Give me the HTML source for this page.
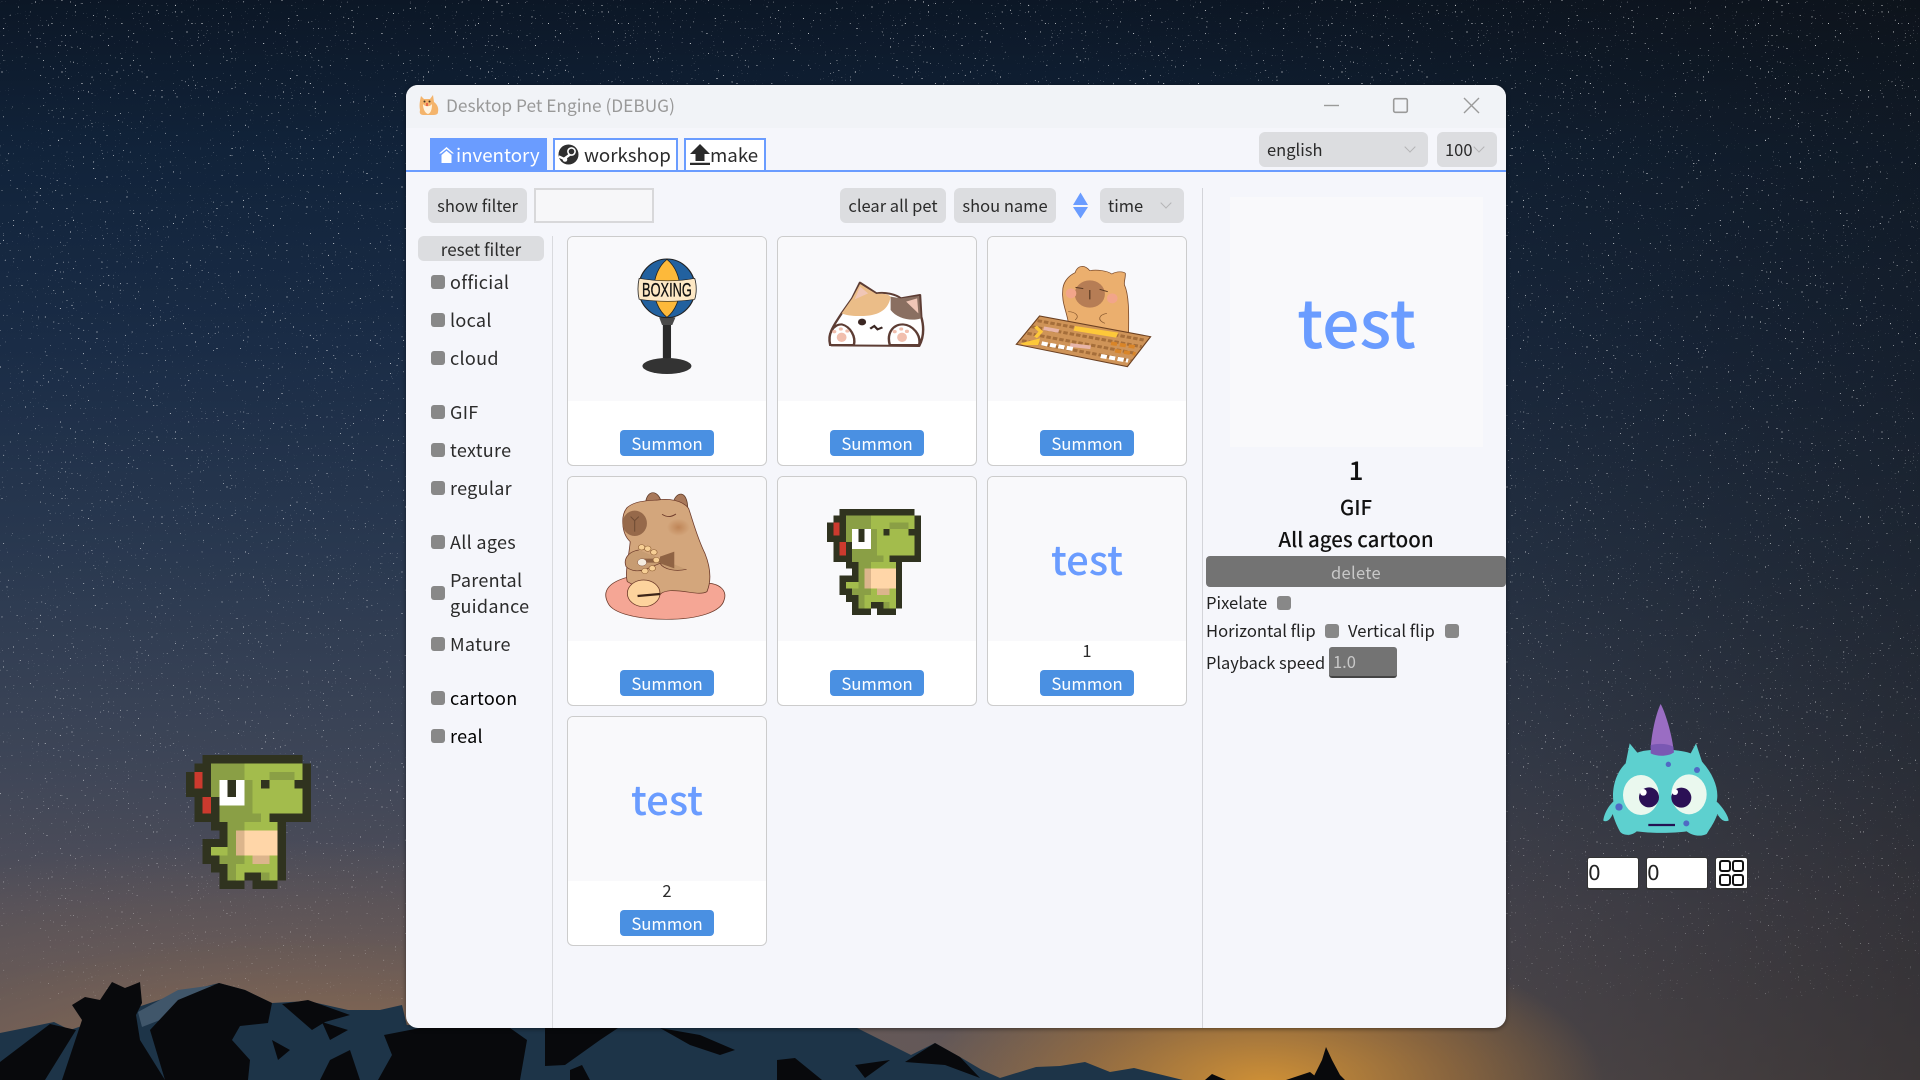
<!DOCTYPE html>
<html><head><meta charset="utf-8"><style>
html,body{margin:0;padding:0;width:1920px;height:1080px;overflow:hidden;background:#1a2230}
*{box-sizing:border-box}
body{position:relative;font-family:"Noto Sans CJK JP","Liberation Sans",sans-serif;color:#2b2b2b}
.a,.t,.b,.c,.card,svg.o{position:absolute}
.bg{position:absolute;left:0;top:0;width:1920px;height:1080px;background:
radial-gradient(ellipse 340px 150px at 1265px 1085px,rgba(214,148,52,.95),rgba(175,120,55,.6) 55%,rgba(140,100,60,0) 100%),
radial-gradient(ellipse 820px 240px at 330px 1080px,rgba(150,112,80,.9),rgba(115,95,85,.5) 60%,rgba(80,75,85,0) 100%),
linear-gradient(90deg,rgba(0,0,0,0) 55%,rgba(15,15,15,.45) 100%),
linear-gradient(180deg,#0c1726 0,#11233a 14%,#1a2c46 32%,#2a3950 52%,#3d4557 70%,#514f5a 84%,#5f5658 100%)}
.win{position:absolute;left:406px;top:85px;width:1100px;height:943px;background:#f5f6fb;border-radius:12px;box-shadow:0 1px 5px rgba(0,0,0,.45);overflow:hidden}
.title{position:absolute;left:0;top:0;width:1100px;height:43px;background:#f1f3f7}
.t{white-space:nowrap;line-height:26px;height:26px;font-size:18px}
.lb{letter-spacing:.3px}
.b{background:#dcdde0;border-radius:6px;display:flex;align-items:center;justify-content:center;font-size:16.5px;color:#2b2b2b;white-space:nowrap}
.c{width:14px;height:14px;background:#888;border-radius:3px}
.card{width:200px;height:230px;background:#fff;border:1px solid #ccc;border-radius:6px;overflow:hidden}
.im{position:absolute;left:0;top:0;width:198px;height:164px;background:#f9f9fb}
.sm{position:absolute;left:52px;top:193px;width:94px;height:26px;background:#4a90e2;border-radius:4px;color:#fff;font-size:16.7px;display:flex;align-items:center;justify-content:center}
.nm{position:absolute;left:0;width:198px;top:161px;text-align:center;font-size:16.5px;line-height:24px}
.test{position:absolute;left:0;width:198px;text-align:center;color:#6a9cff;font-size:40px;line-height:50px;top:56px;font-weight:500}
.tab{position:absolute;top:138px;height:33px;background:#fff;border:2px solid #6a9cff;border-bottom:0}
.sel:after{content:"";position:absolute;width:7px;height:7px;border-right:1.5px solid #b4b4b6;border-bottom:1.5px solid #b4b4b6;transform:rotate(45deg);right:14.5px;top:11px}
.sel{justify-content:flex-start;padding-left:8px}
.tb{font-size:18.7px}
</style></head><body>
<div class="bg"></div>
<svg class="o" style="left:0;top:0" width="1920" height="1080">
<defs><filter id="st" x="0" y="0" width="100%" height="100%" color-interpolation-filters="sRGB"><feTurbulence type="fractalNoise" baseFrequency="0.6" numOctaves="1" seed="11"/><feColorMatrix values="0 0 0 0 1  0 0 0 0 1  0 0 0 0 1  20 0 0 0 -14.600"/></filter>
<linearGradient id="fd" x1="0" y1="0" x2="0" y2="1"><stop offset="0" stop-color="#fff" stop-opacity=".95"/><stop offset=".75" stop-color="#fff" stop-opacity=".6"/><stop offset="1" stop-color="#fff" stop-opacity=".15"/></linearGradient>
<mask id="mk"><rect width="1920" height="1080" fill="url(#fd)"/></mask>
<radialGradient id="bl"><stop offset="0" stop-color="#bf8557"/><stop offset="1" stop-color="#d3a67c"/></radialGradient>
<symbol id="dino" viewBox="0 0 15 16" preserveAspectRatio="none"><g shape-rendering="crispEdges">
<path fill="#30331f" d="M2 0h12v1H2zM1 1h2v1H1zM14 1h1v2h-1zM0 2h1v3H0zM2 2h1v2H2zM5 3h1v2H5zM9 3h1v1H9zM13 3h2v1h-2zM1 4h2v1H1zM14 4h1v3h-1zM1 5h1v3H1zM3 5h1v3H3zM2 7h1v1H2zM10 7h5v1H10zM3 8h2v1H3zM11 8h1v7h-1zM4 9h1v1H4zM2 10h3v1H2zM2 11h1v2H2zM3 12h1v2H3zM4 13h1v3H4zM7 14h2v1H7zM5 15h2v1H5zM8 15h3v1H8z"/>
<path fill="#8a9f45" d="M3 1h4v1H3zM3 2h4v1H3zM10 2h3v1h-3zM3 3h1v2H3zM7 3h1v3H7zM4 6h4v1H4zM4 7h5v1H4zM5 8h2v1H5zM5 9h1v3H5zM4 12h3v1H4zM5 13h1v2H5zM9 14h1v1H9z"/>
<path fill="#a3bc4c" d="M7 1h7v1H7zM7 2h3v1H7zM13 2h1v1h-1zM8 3h1v1H8zM10 3h3v1h-3zM8 4h6v3H8zM9 7h1v1H9zM7 8h4v1H7zM3 11h2v1H3zM7 12h1v1H7zM10 12h1v1h-1zM6 13h5v1H6zM6 14h1v1H6zM10 14h1v1h-1z"/>
<path fill="#fff" d="M4 3h1v3H4zM6 3h1v3H6zM5 5h1v1H5z"/>
<path fill="#cc3a2e" d="M1 2h1v2H1zM2 5h1v2H2z"/>
<path fill="#dcb58c" d="M6 9h1v3H6zM8 12h2v1H8z"/>
<path fill="#ffd6a8" d="M7 9h4v3H7z"/></g></symbol></defs>
<rect width="1920" height="1000" filter="url(#st)" mask="url(#mk)"/>
<!-- mountains -->
<polygon fill="#1d3448" points="0,1033 25,1028 54,1022 70,1030 138,1007 180,993 219,983 245,990 272,1003 308,1001 348,1010 380,1010 402,1005 420,1080 0,1080"/>
<polygon fill="#1d3448" points="400,1025 857,1028 885,1042 911,1055 935,1043 960,1057 982,1070 1000,1078 1036,1067 1060,1066 1085,1062 1110,1072 1134,1068 1183,1080 400,1080"/>
<path fill="#40566a" d="M138 1012L178 990L215 985L160 1020L142 1027Z"/>
<g fill="#08090c">
<path d="M219 983L245 990L272 1003L268 1023L240 1026L232 1040L250 1060L248 1080L165 1080L150 1030L178 1000Z"/>
<path d="M112 982L125 988L140 982L142 1003L136 1015L140 1040L165 1080L62 1080L72 1050L82 1020L72 1005L85 997L100 1000Z"/>
<path d="M0 1062L50 1024L76 1030L45 1080L0 1080Z"/>
<path d="M282 1004L308 1000L350 1015L325 1022L312 1030Z"/>
<path d="M322 1022L348 1030L330 1040Z"/>
<path d="M272 1040L290 1050L278 1060Z"/>
<path d="M330 1060L350 1050L360 1080L320 1080Z"/>
<path d="M384 1035L420 1028L510 1028L527 1040L520 1080L378 1080L392 1055Z"/>
<path d="M545 1028L618 1028L600 1040L565 1065L545 1066Z"/>
<path d="M660 1028L700 1035L735 1050L720 1055L690 1045Z"/>
<path d="M570 1070L582 1065L590 1080L570 1080Z"/>
<path d="M777 1060L795 1058L822 1080L777 1080Z"/>
<path d="M855 1065L890 1060L865 1078Z"/>
<path d="M935 1043L960 1057L980 1078L945 1065L905 1062Z"/>
<path d="M1312 1080L1322 1060L1326 1047L1332 1060L1340 1075L1345 1080Z"/>
<path d="M1205 1080L1212 1074L1226 1080ZM1286 1080L1310 1072L1320 1080Z"/>
</g>
</svg>

<svg class="o" style="left:186px;top:755px" width="125" height="134"><use href="#dino" width="125" height="134"/></svg>

<svg class="o" style="left:1560px;top:690px" width="210" height="210" viewBox="0 0 630 630">
<path fill="#5dd0cf" d="M197 220L209 160L232 188C260 175 350 175 392 190L408 160L426 215C462 255 478 300 470 335C482 345 505 375 506 392C490 398 480 385 472 372C465 395 450 415 440 432C420 442 395 436 380 424C340 430 275 430 230 424C215 438 190 438 180 425C172 410 165 395 158 372C152 388 140 398 130 392C132 370 148 345 160 335C155 290 170 245 197 220Z"/>
<path fill="#9a6dc3" d="M302 42C315 65 335 130 340 175L272 175C275 125 290 65 302 42Z"/>
<path fill="#7a58b3" d="M272 165C295 160 320 160 340 170L342 187C325 200 290 200 272 190Z"/>
<ellipse cx="243" cy="315" rx="54" ry="60" fill="#eaf8ee"/><ellipse cx="387" cy="313" rx="53" ry="60" fill="#eaf8ee"/>
<circle cx="267" cy="322" r="30" fill="#2b1055"/><circle cx="364" cy="323" r="30" fill="#2b1055"/>
<circle cx="250" cy="307" r="10" fill="#fff"/><circle cx="345" cy="306" r="9" fill="#fff"/>
<path d="M265 405H345" stroke="#241252" stroke-width="7"/>
<g fill="#5069c4"><circle cx="325" cy="223" r="8"/><circle cx="411" cy="240" r="9"/><circle cx="177" cy="351" r="11"/><circle cx="379" cy="400" r="9"/></g>
</svg>
<div class="a" style="left:1587px;top:857px;width:52px;height:33px;background:#fff;border:1px solid #333;border-bottom-width:2px;border-radius:3px;line-height:30px;color:#222;font-family:'DejaVu Sans',sans-serif;font-size:20px">0</div>
<div class="a" style="left:1646px;top:857px;width:62px;height:33px;background:#fff;border:1px solid #333;border-bottom-width:2px;border-radius:3px;line-height:30px;color:#222;font-family:'DejaVu Sans',sans-serif;font-size:20px">0</div>
<div class="a" style="left:1715px;top:857px;width:33px;height:33px;background:#fff;border:1px solid #333;border-bottom-width:2px;border-radius:3px"></div>
<svg class="o" style="left:1718px;top:859px" width="27" height="28" fill="none" stroke="#111" stroke-width="2"><rect x="2" y="2" width="10" height="10" rx="2"/><rect x="15" y="2" width="10" height="10" rx="2"/><rect x="2" y="16" width="10" height="10" rx="2"/><rect x="15" y="16" width="10" height="10" rx="2"/></svg>

<div class="win"><div class="title"></div></div>

<!-- titlebar -->
<svg class="o" style="left:418px;top:93px" width="22" height="23" viewBox="0 0 22 23"><path fill="#f4b46c" d="M3 3l3 3h6l3-4 1 7c3 2 5 6 4 10 0 3-3 3-7 3H6C3 22 1 21 2 17 1 12 2 7 3 3Z"/><path fill="#fff3e0" d="M5 11c2 3 7 3 9 0 0 5-1 9-4 10-3-1-5-5-5-10Z"/><circle cx="6.500" cy="8.500" r="1" fill="#432"/><circle cx="11.500" cy="8.500" r="1" fill="#432"/><path fill="#e8674a" d="M8 10h2v3H8z"/></svg>
<div class="t" style="left:446px;top:92px;font-size:17.3px;color:#999">Desktop Pet Engine (DEBUG)</div>
<svg class="o" style="left:1320px;top:94px" width="165" height="24" fill="none" stroke="#9a9a9a" stroke-width="1.4"><path d="M4 11.500H19"/><rect x="73.700" y="4.700" width="13.600" height="13.600" rx="1.500" stroke-width="1.600"/><path d="M144 4L159 19M159 4L144 19"/></svg>

<!-- tabs -->
<div class="a" style="left:430px;top:138px;width:117px;height:33px;background:#6a9cff"></div>
<svg class="o" style="left:439px;top:147px" width="15" height="16"><path fill="#fff" d="M7.500 0L15 6.500H13L7.500 2L2 6.500H0ZM2.500 8L7.500 3.800L12.500 8V16H2.500Z"/></svg>
<div class="t tb" style="left:456px;top:142px;color:#fff">inventory</div>
<div class="tab" style="left:553px;width:125px"></div>
<svg class="o" style="left:558px;top:144px" width="21" height="21" viewBox="0 0 21 21"><circle cx="10.500" cy="10.500" r="10" fill="#2f2f2f"/><circle cx="13.500" cy="7.500" r="3.600" fill="none" stroke="#fff" stroke-width="1.600"/><path d="M0.800 12.500L7 15.300M6 15L12 10.500" stroke="#fff" stroke-width="2.400" fill="none"/><circle cx="7" cy="15.500" r="2.300" fill="#fff"/></svg>
<div class="t tb" style="left:584px;top:142px">workshop</div>
<div class="tab" style="left:684px;width:82px"></div>
<svg class="o" style="left:690px;top:144px" width="20" height="21"><path fill="#2a2a2a" d="M10 0L20 10H14.500V17H5.500V10H0ZM0 18.800H20V21H0Z"/></svg>
<div class="t tb" style="left:710px;top:142px">make</div>
<div class="a" style="left:406px;top:170px;width:1100px;height:2px;background:#6a9cff"></div>

<div class="b sel" style="left:1259px;top:132px;width:169px;height:35px;padding-bottom:1px">english</div>
<div class="b sel" style="left:1437px;top:132px;width:60px;height:35px;padding-bottom:1px">100</div>

<!-- toolbar -->
<div class="b" style="left:428px;top:188px;width:99px;height:35px;padding-bottom:1px">show filter</div>
<div class="a" style="left:534px;top:188px;width:120px;height:35px;background:#f7f7f9;border:2px solid #d8d8da"></div>
<div class="b" style="left:840px;top:188px;width:106px;height:35px;padding-bottom:1px">clear all pet</div>
<div class="b" style="left:954px;top:188px;width:102px;height:35px;padding-bottom:1px">shou name</div>
<svg class="o" style="left:1072px;top:192px" width="17" height="27"><path fill="#6a9cff" d="M8.500 0.500L16 13H1ZM1 15H16L8.500 26.500Z"/></svg>
<div class="b sel" style="left:1100px;top:188px;width:84px;height:35px;padding-bottom:1px">time</div>

<!-- sidebar -->
<div class="b" style="left:418px;top:236px;width:126px;height:25px;font-size:17px">reset filter</div>
<div class="a" style="left:552px;top:236px;width:1px;height:792px;background:#d9dade"></div>
<div class="a" style="left:1202px;top:188px;width:1px;height:840px;background:#d3d4d9"></div>
<div class="c" style="left:431px;top:275px"></div><div class="t lb" style="left:450px;top:269px">official</div>
<div class="c" style="left:431px;top:313px"></div><div class="t lb" style="left:450px;top:307px">local</div>
<div class="c" style="left:431px;top:351px"></div><div class="t lb" style="left:450px;top:345px">cloud</div>
<div class="c" style="left:431px;top:405px"></div><div class="t lb" style="left:450px;top:399px">GIF</div>
<div class="c" style="left:431px;top:443px"></div><div class="t lb" style="left:450px;top:437px">texture</div>
<div class="c" style="left:431px;top:481px"></div><div class="t lb" style="left:450px;top:475px">regular</div>
<div class="c" style="left:431px;top:535px"></div><div class="t lb" style="left:450px;top:529px">All ages</div>
<div class="c" style="left:431px;top:586px"></div><div class="t lb" style="left:450px;top:567px">Parental</div><div class="t lb" style="left:450px;top:593px">guidance</div>
<div class="c" style="left:431px;top:637px"></div><div class="t lb" style="left:450px;top:631px">Mature</div>
<div class="c" style="left:431px;top:691px"></div><div class="t lb" style="left:450px;top:685px;color:#000">cartoon</div>
<div class="c" style="left:431px;top:729px"></div><div class="t lb" style="left:450px;top:723px;color:#000">real</div>

<!-- cards -->
<div class="card" style="left:567px;top:236px"><div class="im"></div><div class="sm">Summon</div></div>
<div class="card" style="left:777px;top:236px"><div class="im"></div><div class="sm">Summon</div></div>
<div class="card" style="left:987px;top:236px"><div class="im"></div><div class="sm">Summon</div></div>
<div class="card" style="left:567px;top:476px"><div class="im"></div><div class="sm">Summon</div></div>
<div class="card" style="left:777px;top:476px"><div class="im"></div><div class="sm">Summon</div></div>
<div class="card" style="left:987px;top:476px"><div class="im"><div class="test">test</div></div><div class="nm">1</div><div class="sm">Summon</div></div>
<div class="card" style="left:567px;top:716px"><div class="im"><div class="test">test</div></div><div class="nm">2</div><div class="sm">Summon</div></div>

<!-- row 1 art -->
<svg class="o" style="left:560px;top:230px" width="640" height="240" viewBox="0 0 1568 720" preserveAspectRatio="none">
<ellipse cx="262" cy="408" rx="60" ry="24" fill="#333"/>
<rect x="252" y="275" width="20" height="110" fill="#2a2a2a"/>
<path d="M243 262H283L275 285H250Z" fill="#4a4a4a"/>
<ellipse cx="262" cy="175" rx="69" ry="88" fill="#22619f" stroke="#222" stroke-width="3"/>
<path d="M262 88C220 130 220 220 262 262C304 220 304 130 262 88Z" fill="#fdb93a" stroke="#222" stroke-width="2"/>
<path d="M194 145C240 155 290 155 330 145C335 165 335 190 330 208C290 216 240 216 194 208C190 190 190 165 194 145Z" fill="#fde8c5" stroke="#222" stroke-width="2"/>
<text x="262" y="200" text-anchor="middle" font-family="Liberation Sans" font-size="58" fill="#111" stroke="#111" stroke-width="1" textLength="122" lengthAdjust="spacingAndGlyphs">BOXING</text>

<path d="M665 346C652 310 675 280 690 250L716 205L735 158L775 190C800 185 825 195 835 205L882 195L885 260C892 290 892 320 880 348Z" fill="#fff" stroke="#5d3d34" stroke-width="6" stroke-linejoin="round"/>
<path d="M690 250L716 205L735 162L775 192C790 190 805 192 810 200C805 240 780 260 730 258C715 258 700 255 690 250Z" fill="#ebbd88"/>
<path d="M810 200L835 205L880 198L884 265C860 275 825 265 810 240Z" fill="#8a6f61"/>
<path d="M735 170L722 208L755 190ZM875 205L878 250L848 215Z" fill="#f0c6b6"/>
<circle cx="740" cy="276" r="10" fill="#3a2622"/>
<path d="M760 296L770 288L778 298L790 292" stroke="#3a2622" stroke-width="6" fill="none"/>
<path d="M662 345C655 310 670 283 690 283C712 290 725 320 720 345Z" fill="#fff" stroke="#5d3d34" stroke-width="6"/>
<path d="M808 345C800 310 815 283 840 283C865 285 885 315 880 345Z" fill="#fff" stroke="#5d3d34" stroke-width="6"/>
<g fill="#f1bfae"><ellipse cx="690" cy="322" rx="12" ry="14"/><circle cx="672" cy="305" r="5"/><circle cx="688" cy="297" r="5"/><circle cx="704" cy="303" r="5"/><ellipse cx="838" cy="322" rx="12" ry="14"/><circle cx="820" cy="305" r="5"/><circle cx="836" cy="297" r="5"/><circle cx="850" cy="304" r="5"/></g>

<path d="M1245 275C1240 240 1228 215 1232 175C1235 150 1250 135 1262 128C1268 105 1285 103 1298 122C1315 118 1340 122 1352 132C1365 122 1382 125 1385 130C1386 145 1381 155 1383 165C1396 200 1393 270 1393 312Z" fill="#ebaf6e" stroke="#7a4a2a" stroke-width="2"/>
<ellipse cx="1298" cy="192" rx="37" ry="41" fill="#b67d55"/>
<ellipse cx="1252" cy="190" rx="13" ry="15" fill="#f2a58a"/><ellipse cx="1353" cy="205" rx="13" ry="15" fill="#f2a58a"/>
<path d="M1263 172L1282 176M1322 178L1342 185M1298 180V208" stroke="#5b3a22" stroke-width="3" fill="none"/>
<path d="M1245 245C1262 245 1275 258 1262 270M1340 250C1320 255 1315 270 1335 280" stroke="#8a5a30" stroke-width="2" fill="none"/>
<polygon points="1118,343 1175,258 1447,320 1390,410" fill="#cf9458" stroke="#6b4021" stroke-width="3"/>
<path d="M1170 272L1430 330M1155 290L1425 350M1145 310L1410 370M1132 332L1400 392" stroke="#a56e3a" stroke-width="9" stroke-dasharray="11 5"/>
<polygon points="1262,288 1368,308 1362,323 1258,302" fill="#fdc83a"/>
<polygon points="1128,340 1176,325 1172,345 1136,345" fill="#fdc83a"/>
<path d="M1165 290L1178 305L1165 322" stroke="#fdc83a" stroke-width="9" fill="none"/>
<path d="M1185 295L1222 303M1250 345L1300 352" stroke="#e8b5a8" stroke-width="11"/>
<path d="M1180 340L1262 358M1325 378L1392 392" stroke="#fff" stroke-width="12" stroke-dasharray="15 6"/>
<path d="M1350 340L1415 352M1360 362L1410 372" stroke="#d98528" stroke-width="11" stroke-dasharray="15 7"/>
</svg>

<!-- row 2 art -->
<svg class="o" style="left:560px;top:470px" width="640" height="240" viewBox="0 0 1568 720" preserveAspectRatio="none">
<path d="M210 95C215 58 240 60 248 95ZM277 98C285 62 312 60 313 115Z" fill="#a9795a" stroke="#5e3b28" stroke-width="2"/>
<path d="M118 400C100 360 125 335 165 322L345 340C395 335 410 365 402 390C395 425 340 448 260 448C190 448 130 430 118 400Z" fill="#f5a695" stroke="#6d3a2a" stroke-width="2"/>
<path d="M165 335C158 310 170 250 172 215C150 190 148 135 165 112C185 92 215 92 240 90C265 85 300 90 315 115C325 150 335 200 355 250C368 290 372 330 360 365C340 378 310 360 270 362C250 365 245 370 240 385Z" fill="#d3a67c" stroke="#6d3a2a" stroke-width="2"/>
<ellipse cx="183" cy="160" rx="30" ry="38" fill="#96694a"/>
<path d="M173 140L183 152L193 140M183 152V185" stroke="#6d4a33" stroke-width="2.500" fill="none"/>
<path d="M250 133C262 142 272 142 284 132" stroke="#6d3a2a" stroke-width="2.500" fill="none"/>
<ellipse cx="290" cy="172" rx="28" ry="26" fill="url(#bl)"/>
<path d="M193 240C165 245 155 270 162 290C175 305 195 305 210 298L245 280C255 300 285 305 310 298" fill="#c79c72" stroke="#6d3a2a" stroke-width="2"/>
<path d="M245 260L280 245V295L245 280Z" fill="#8f6344"/>
<path d="M200 272H245" stroke="#8f6344" stroke-width="12"/>
<g fill="#f7cf95" stroke="#8a5a30" stroke-width="1.500"><circle cx="200" cy="232" r="8"/><circle cx="215" cy="236" r="8"/><circle cx="230" cy="247" r="8"/><circle cx="236" cy="270" r="8"/><circle cx="226" cy="295" r="8"/><circle cx="208" cy="303" r="8"/></g>
<circle cx="201" cy="277" r="11" fill="#f4ecdf" stroke="#6d3a2a"/>
<circle cx="205" cy="370" r="40" fill="#fdd39d" stroke="#6d3a2a" stroke-width="2"/>
<path d="M190 378L245 372" stroke="#3d2418" stroke-width="7"/>
</svg>
<svg class="o" style="left:827px;top:509px" width="94" height="106"><use href="#dino" width="94" height="106"/></svg>

<!-- right panel -->
<div class="a" style="left:1230px;top:197px;width:253px;height:250px;background:#f9f9fb"></div>
<div class="a" style="left:1230px;top:280px;width:253px;text-align:center;color:#6a9cff;font-size:66px;line-height:80px;font-weight:500">test</div>
<div class="a" style="left:1206px;top:453px;width:300px;text-align:center;font-size:26px;line-height:34px;font-weight:500;color:#111">1</div>
<div class="a" style="left:1206px;top:492px;width:300px;text-align:center;font-size:20.500px;line-height:28px;font-weight:500;color:#111">GIF</div>
<div class="a" style="left:1206px;top:524px;width:300px;text-align:center;font-size:20.500px;line-height:28px;font-weight:500;color:#111">All ages cartoon</div>
<div class="b" style="left:1206px;top:556px;width:300px;height:31px;background:#737373;color:#c8c8c8;font-size:16.500px;border-radius:4px;letter-spacing:.3px">delete</div>
<div class="t" style="left:1206px;top:589px;font-size:16.600px;color:#222">Pixelate</div><div class="c" style="left:1277px;top:596px"></div>
<div class="t" style="left:1206px;top:617px;font-size:16.600px;color:#222">Horizontal flip</div><div class="c" style="left:1325px;top:624px"></div>
<div class="t" style="left:1348px;top:617px;font-size:16.600px;color:#222">Vertical flip</div><div class="c" style="left:1445px;top:624px"></div>
<div class="t" style="left:1206px;top:649px;font-size:16.400px;color:#222">Playback speed</div>
<div class="a" style="left:1329px;top:647px;width:68px;height:31px;background:#737373;border-bottom:2px solid #444;border-radius:3px;color:#c8c8c8;font-size:16.500px;line-height:29px;padding-left:4px">1.0</div>
</body></html>
